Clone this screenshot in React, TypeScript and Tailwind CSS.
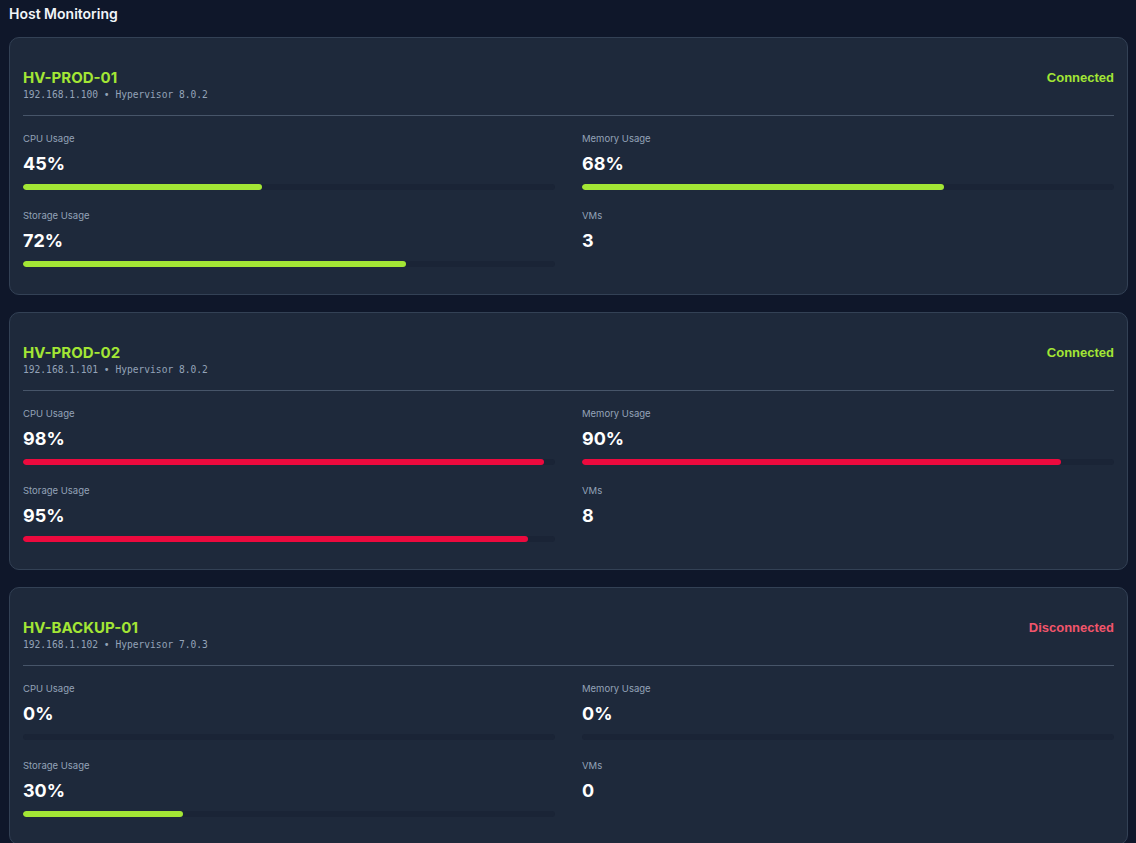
type Metric = { label: string; value: number; bar: boolean };

type Host = {
  name: string;
  ip: string;
  version: string;
  connected: boolean;
  cpu: number;
  memory: number;
  storage: number;
  vms: number;
};

const hosts: Host[] = [
  { name: "HV-PROD-01", ip: "192.168.1.100", version: "8.0.2", connected: true, cpu: 45, memory: 68, storage: 72, vms: 3 },
  { name: "HV-PROD-02", ip: "192.168.1.101", version: "8.0.2", connected: true, cpu: 98, memory: 90, storage: 95, vms: 8 },
  { name: "HV-BACKUP-01", ip: "192.168.1.102", version: "7.0.3", connected: false, cpu: 0, memory: 0, storage: 30, vms: 0 }
];

function MetricBlock({ metric }: { metric: Metric }) {
  const high = metric.value >= 90;
  return (
    <div className="flex flex-col">
      <div className="text-[9.5px] leading-[15px] text-[#94a3b8]">{metric.label}</div>
      <div className="mt-[4px] text-[18px] font-bold leading-[28px] text-white">
        {metric.bar ? `${metric.value}%` : metric.value}
      </div>
      {metric.bar ? (
        <div className="mt-[6px] h-[6px] w-full overflow-hidden rounded-full bg-[#1a2436]">
          <div
            className={high ? "h-full rounded-full bg-[#ec0a3e]" : "h-full rounded-full bg-[#a3e635]"}
            style={{ width: `${metric.value}%` }}
          />
        </div>
      ) : (
        <div className="mt-[6px] h-[6px]" />
      )}
    </div>
  );
}

function HostCard({ host }: { host: Host }) {
  const metrics: Metric[] = [
    { label: "CPU Usage", value: host.cpu, bar: true },
    { label: "Memory Usage", value: host.memory, bar: true },
    { label: "Storage Usage", value: host.storage, bar: true },
    { label: "VMs", value: host.vms, bar: false }
  ];

  return (
    <div className="rounded-[10px] border border-[#334155] bg-[#1e293b] px-[13px] pb-[27px] pt-[30px]">
      <div className="flex items-start justify-between border-b border-[#475569] pb-[13px]">
        <div>
          <div className="text-[15px] font-bold leading-[20px] text-[#a3e635]">{host.name}</div>
          <div className="font-['DejaVu_Sans_Mono',monospace] text-[9.6px] leading-[14px] text-[#94a3b8]">
            {host.ip} • Hypervisor {host.version}
          </div>
        </div>
        <div
          className={
            host.connected
              ? "font-['Liberation_Sans',sans-serif] text-[13px] font-bold leading-[20px] text-[#a3e635]"
              : "font-['Liberation_Sans',sans-serif] text-[13px] font-bold leading-[20px] text-[#f2556b]"
          }
        >
          {host.connected ? "Connected" : "Disconnected"}
        </div>
      </div>
      <div className="mt-[15px] grid grid-cols-2 gap-x-[27px] gap-y-[18px]">
        {metrics.map((m) => (
          <MetricBlock key={m.label} metric={m} />
        ))}
      </div>
    </div>
  );
}

export default function App() {
  return (
    <div className="min-h-screen bg-[#0f172a] pb-6 pl-[9px] pr-[8px] font-['Inter',sans-serif]">
      <h1 className="pt-[4px] text-[14px] font-semibold leading-[20px] text-[#f1f5f9]">Host Monitoring</h1>
      <div className="mt-[13px] flex flex-col gap-[17px]">
        {hosts.map((h) => (
          <HostCard key={h.name} host={h} />
        ))}
      </div>
    </div>
  );
}
